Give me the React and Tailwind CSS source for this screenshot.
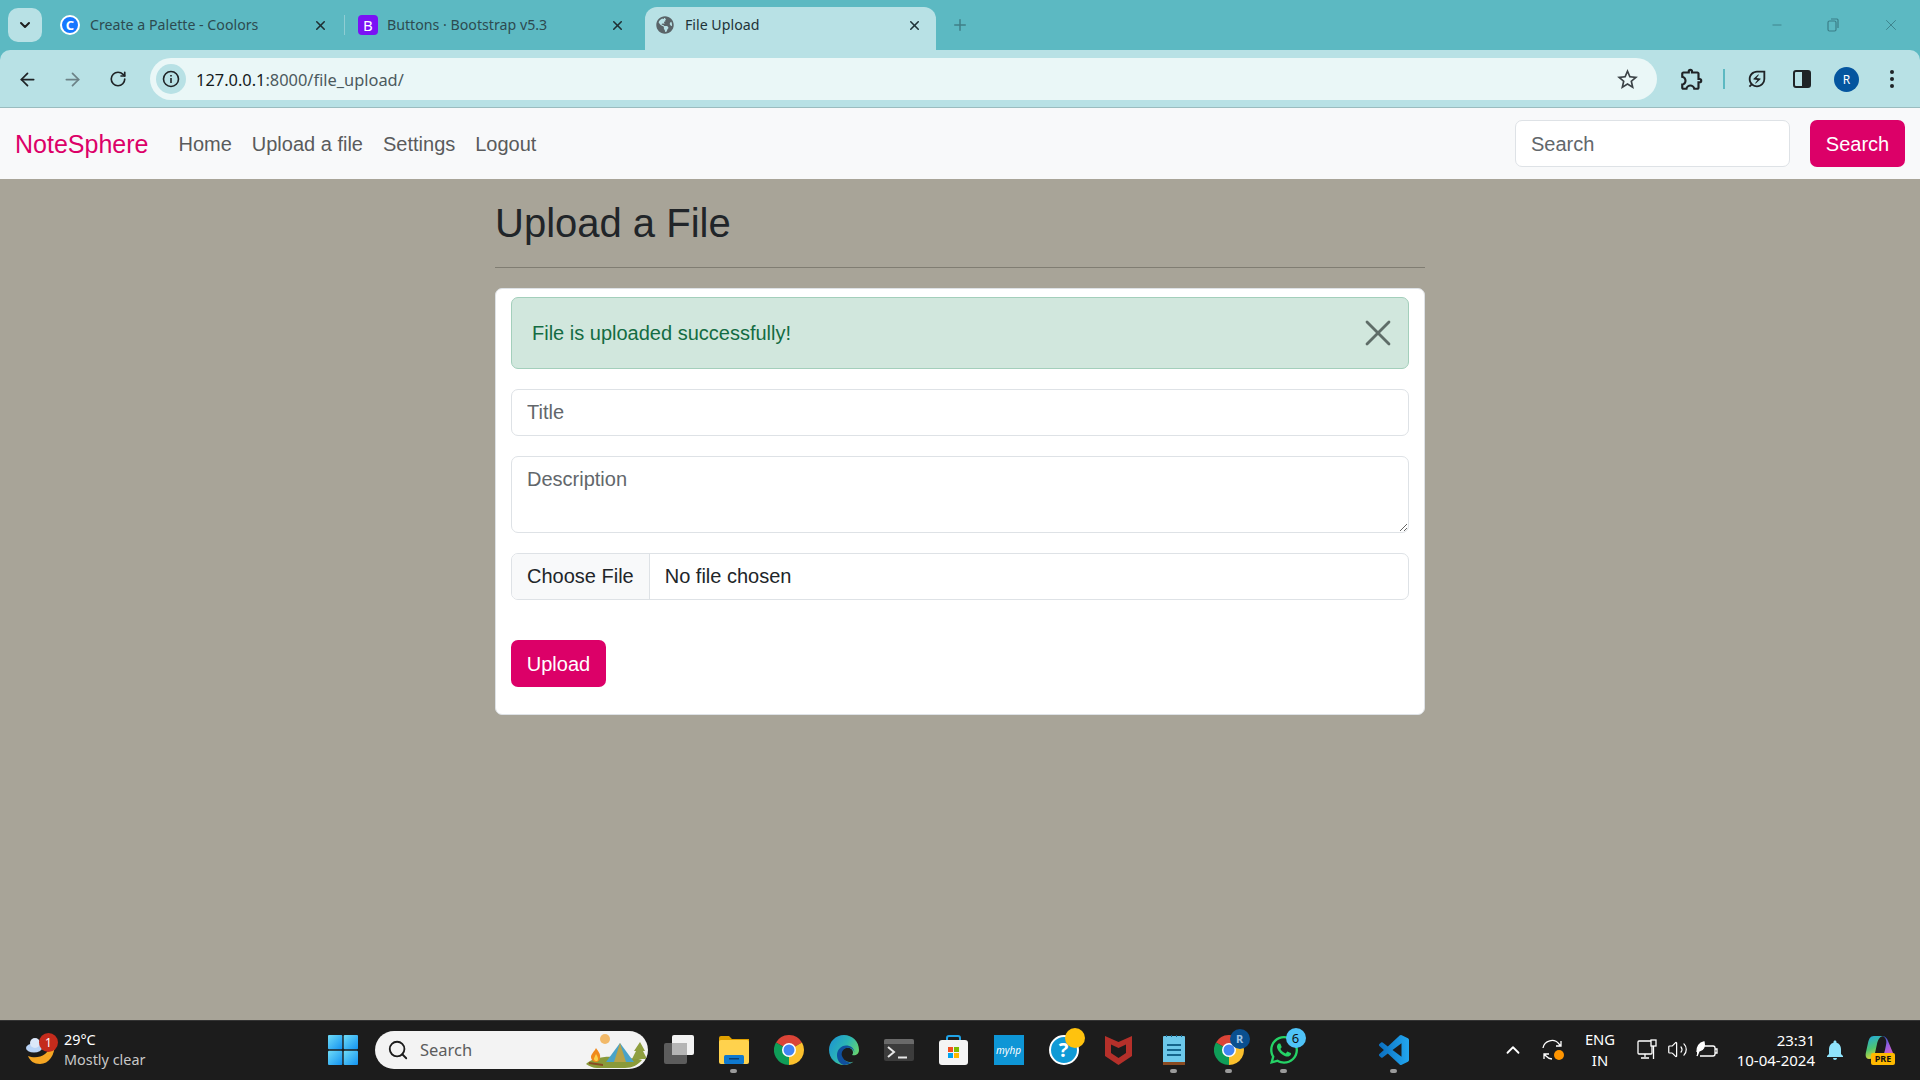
import React from 'react';
import { ArrowLeft, ArrowRight, RotateCw, Plus, X, Minus, ChevronDown, ChevronUp, Search as SearchIcon, Volume2 } from 'lucide-react';
import { MdOutlineExtension, MdOutlineEnergySavingsLeaf, MdStarBorder, MdNotifications } from 'react-icons/md';
import { FaGlobeAmericas, FaWhatsapp } from 'react-icons/fa';

function Chrome({ size = 30 }) {
  return (
    <svg width={size} height={size} viewBox="0 0 24 24">
      <path d="M12 12L1.6 6A12 12 0 0 1 22.39 6Z" fill="#db4437" />
      <path d="M12 12L1.6 6A12 12 0 0 0 12 24Z" fill="#0f9d58" />
      <path d="M12 12L22.39 6A12 12 0 0 1 12 24Z" fill="#fbc02d" />
      <circle cx="12" cy="12" r="5.6" fill="#fff" />
      <circle cx="12" cy="12" r="4.4" fill="#4285f4" />
    </svg>
  );
}

function Edge() {
  return (
    <svg width="30" height="30" viewBox="0 0 30 30">
      <defs>
        <linearGradient id="edgeTop" x1="0" y1="0" x2="1" y2="0.6">
          <stop offset="0" stopColor="#1a8fd6" />
          <stop offset="0.55" stopColor="#2cb5b5" />
          <stop offset="1" stopColor="#6bd66a" />
        </linearGradient>
      </defs>
      <path d="M15 0C6.7 0 0 6.7 0 15c0 8.3 6.7 15 15 15 3.6 0 6.8-1.2 9.4-3.2C20 28 14 26 12 21c-1-3 .5-7 4.5-8 4-1 7.5 1 7.5 4.5 0 1-.4 2-1 2.6 3.5 1 7-1 7-5.1C30 6.5 23.3 0 15 0Z" fill="url(#edgeTop)" />
      <path d="M8 20c0-5 4-9.5 9-9.5 4.5 0 8 2.5 8.5 7-1-3.5-4.5-5.5-8-4.5-4 1-5.5 5-4.500 8 1.500 4 5.500 7 10.500 6.500C20.500 29 17.500 30 15 30 10.500 29 8 25 8 20Z" fill="#0f4f9e" />
    </svg>
  );
}

function TentScene() {
  return (
    <svg width="64" height="38" viewBox="0 0 64 38">
      <circle cx="21" cy="8" r="5" fill="#f2b968" />
      <path d="M2 33c6-6 18-8 30-7 10 1 20 1 26 3-4 5-10 8-17 8H13C9 37 5 35 2 33Z" fill="#8a9a3a" />
      <path d="M56 11l5 9-2 0 4 8H48l4-8-2 0Z" fill="#8f9f3f" />
      <path d="M36 12L50 31H22Z" fill="#4aa3c8" />
      <path d="M36 12L30 31h12Z" fill="#b7a34a" />
      <path d="M12 17c2 3 5 6 4 10 0 2-2 4-4 4s-5-2-5-5c0-3 3-5 5-9Z" fill="#f08a1d" />
      <path d="M12 23c1 2 2 3 2 5s-1 2-2 2-2-1-2-2 1-3 2-5Z" fill="#fbd14b" />
      <path d="M5 31l14 2v2L5 33Z" fill="#8a4b22" />
    </svg>
  );
}

function Slot({ children, dot }) {
  return (
    <div className="relative w-[55px] h-full flex items-center justify-center">
      {children}
      {dot && <span className="absolute bottom-[5px] w-[7px] h-[4px] rounded-full bg-[#9a9a9a]" />}
    </div>
  );
}

function Taskbar() {
  return (
    <div className="h-[60px] bg-[#1c1c1c] border-t border-[#333] pb-[2px] flex items-center text-white font-['Noto_Sans',sans-serif]">
      {/* weather */}
      <div className="w-[315px] h-full flex items-center pl-[25px] gap-[9px]">
        <div className="relative w-[30px] h-[32px]">
          <svg width="30" height="32" viewBox="0 0 30 32">
            <path d="M30 9c0 12-6 21-15 21-6 0-10-3-12-8 5 2 12 2 17-2 4-3 6-7 6-11Z" fill="#f5a623" />
            <ellipse cx="9" cy="14" rx="8" ry="4.500" fill="#b9d4f7" />
            <circle cx="10" cy="9" r="5" fill="#dbe8fa" />
          </svg>
          <span className="absolute -top-[1px] left-[14px] w-[19px] h-[19px] rounded-full bg-[#c42b1c] text-[12px] leading-[19px] text-center">1</span>
        </div>
        <div className="text-[14.400px] leading-[20px]">
          <p>29°C</p>
          <p className="text-[#c8c8c8]">Mostly clear</p>
        </div>
      </div>

      {/* start + search */}
      <Slot>
        <svg width="30" height="30" viewBox="0 0 30 30">
          <defs>
            <linearGradient id="winA" x1="0" y1="0" x2="1" y2="1">
              <stop offset="0" stopColor="#6fdcf7" />
              <stop offset="1" stopColor="#1292f0" />
            </linearGradient>
          </defs>
          <rect x="0" y="0" width="14.300" height="14.300" rx="1" fill="url(#winA)" />
          <rect x="15.700" y="0" width="14.300" height="14.300" rx="1" fill="url(#winA)" />
          <rect x="0" y="15.700" width="14.300" height="14.300" rx="1" fill="url(#winA)" />
          <rect x="15.700" y="15.700" width="14.300" height="14.300" rx="1" fill="url(#winA)" />
        </svg>
      </Slot>
      <div className="w-[273px] h-[38px] ml-[5px] mr-[3px] rounded-full bg-[#f3f3f3] flex items-center relative overflow-hidden">
        <SearchIcon size={22} strokeWidth={2} className="ml-[12px] text-[#1c1c1c]" />
        <span className="ml-[11px] text-[16.500px] text-[#5c5c5c]">Search</span>
        <div className="absolute right-0 bottom-0"><TentScene /></div>
      </div>

      {/* pinned apps */}
      <Slot>
        <svg width="30" height="30" viewBox="0 0 30 30">
          <rect x="0" y="8" width="23" height="21" rx="2" fill="#5c5c5c" />
          <rect x="8" y="0" width="22" height="20" rx="2" fill="#f2f2f2" />
          <rect x="8" y="8" width="15" height="12" fill="#b5b5b5" />
        </svg>
      </Slot>
      <Slot dot>
        <svg width="30" height="28" viewBox="0 0 30 28">
          <path d="M0 2a2 2 0 0 1 2-2h8l3 3h17v5H0Z" fill="#e0a100" />
          <rect x="0" y="4" width="30" height="24" rx="2" fill="#ffd24d" />
          <rect x="5" y="19" width="20" height="9" rx="1.500" fill="#0f79cf" />
          <rect x="10" y="22" width="10" height="1.500" fill="#0a3f73" />
        </svg>
      </Slot>
      <Slot><Chrome /></Slot>
      <Slot><Edge /></Slot>
      <Slot>
        <div className="w-[30px] h-[22px] rounded-[2px] bg-[#3c3c3c] relative">
          <div className="h-[5px] bg-[#6a6a6a] rounded-t-[2px]" />
          <svg className="absolute left-[3px] top-[7px]" width="24" height="13" viewBox="0 0 24 13">
            <path d="M1 1l6 5-6 5" fill="none" stroke="#e8e8e8" strokeWidth="2" />
            <path d="M11 11.500h9" stroke="#e8e8e8" strokeWidth="2" />
          </svg>
        </div>
      </Slot>
      <Slot>
        <svg width="29" height="30" viewBox="0 0 29 30">
          <path d="M8 7V3a2 2 0 0 1 2-2h9a2 2 0 0 1 2 2v4" fill="none" stroke="#20a4e8" strokeWidth="2" />
          <rect x="0" y="5" width="29" height="25" rx="3" fill="#f4f4f4" />
          <rect x="9" y="12" width="5" height="5" fill="#f25022" />
          <rect x="15" y="12" width="5" height="5" fill="#7fba00" />
          <rect x="9" y="18" width="5" height="5" fill="#00a4ef" />
          <rect x="15" y="18" width="5" height="5" fill="#ffb900" />
        </svg>
      </Slot>
      <Slot>
        <div className="w-[30px] h-[30px] bg-[#0e96d6] flex items-center justify-center text-[10px] italic leading-none">myhp</div>
      </Slot>
      <Slot>
        <div className="relative w-[30px] h-[30px] rounded-full bg-[#0f9ad6] border-2 border-white flex items-center justify-center">
          <span className="text-[20px] font-bold leading-none">?</span>
          <span className="absolute -top-[9px] -right-[8px] w-[20px] h-[20px] rounded-full bg-[#ffc20e]" />
        </div>
      </Slot>
      <Slot>
        <svg width="27" height="30" viewBox="0 0 27 30">
          <path d="M0 1l13.500 6L27 1v20l-13.500 9L0 21Z" fill="#b5302a" />
          <path d="M6 9.500l7.500 3.500L21 9.500V18l-7.500 5L6 18Z" fill="#1c1c1c" />
        </svg>
      </Slot>
      <Slot dot>
        <svg width="22" height="30" viewBox="0 0 22 30">
          <rect x="0" y="1" width="22" height="29" rx="1" fill="#6cc8ea" />
          <rect x="0" y="27" width="22" height="3" fill="#8a4b22" />
          <path d="M4 10h14M4 15h14M4 20h14" stroke="#14648c" strokeWidth="2" />
          <path d="M3 1h1M8 1h1M13 1h1M18 1h1" stroke="#14648c" strokeWidth="2" />
        </svg>
      </Slot>
      <Slot dot>
        <div className="relative">
          <Chrome />
          <span className="absolute -top-[6px] -right-[6px] w-[20px] h-[20px] rounded-full bg-[#0a4f8f] text-[#9fc3e6] text-[11px] font-bold leading-[20px] text-center">R</span>
        </div>
      </Slot>
      <Slot dot>
        <div className="relative">
          <FaWhatsapp size={32} className="text-[#25d366]" />
          <span className="absolute -top-[6px] -right-[6px] w-[20px] h-[20px] rounded-full bg-[#4fc3f7] text-[#111] text-[13px] leading-[20px] text-center">6</span>
        </div>
      </Slot>
      <Slot />
      <Slot dot>
        <svg width="30" height="30" viewBox="0 0 100 100">
          <defs>
            <linearGradient id="vsc" x1="0" y1="0" x2="1" y2="0">
              <stop offset="0" stopColor="#0b6fc0" />
              <stop offset="1" stopColor="#22a7f0" />
            </linearGradient>
          </defs>
          <path d="M96.460 10.800L75.860.870a6.230 6.230 0 0 0-7.100 1.200L29.350 38.040 12.170 25a4.160 4.160 0 0 0-5.310.240L1.360 30.230a4.170 4.170 0 0 0 0 6.160L16.260 50 1.360 63.600a4.170 4.170 0 0 0 0 6.170l5.500 5a4.160 4.160 0 0 0 5.310.240l17.180-13.040 39.410 35.960a6.220 6.220 0 0 0 7.100 1.200l20.600-9.920A6.250 6.250 0 0 0 100 83.580V16.420a6.250 6.250 0 0 0-3.540-5.620zM75 72.700L45.100 50 75 27.300z" fill="url(#vsc)" />
        </svg>
      </Slot>

      {/* tray */}
      <div className="flex-1 h-full flex items-center">
        <ChevronUp size={22} strokeWidth={2} className="ml-[81px]" />
        <div className="relative ml-[18px] w-[22px] h-[22px]">
          <svg width="22" height="22" viewBox="0 0 22 22" fill="none" stroke="#fff" strokeWidth="1.300">
            <path d="M1 9a9 9 0 0 1 16-4l2 2M19 2v5h-5" />
            <path d="M2 15l2 2a9 9 0 0 0 6 3M2 20v-5h5" />
          </svg>
          <span className="absolute right-0 bottom-[1px] w-[10px] h-[10px] rounded-full bg-[#ff9500]" />
        </div>
        <div className="ml-[18px] w-[36px] text-center text-[14.800px] leading-[21px]">
          <p>ENG</p>
          <p>IN</p>
        </div>
        <svg className="ml-[19px]" width="20" height="22" viewBox="0 0 20 22" fill="none" stroke="#fff" strokeWidth="1.300">
          <rect x="1" y="2" width="14" height="13" rx="1" />
          <path d="M8 15v3M4 19h8" />
          <rect x="14" y="1" width="5" height="6" fill="#1c1c1c" />
          <path d="M16.500 7v13" />
        </svg>
        <Volume2 size={21} strokeWidth={1.400} className="ml-[10px]" />
        <svg className="ml-[8px]" width="22" height="20" viewBox="0 0 22 20" fill="none" stroke="#fff" strokeWidth="1.300">
          <path d="M6 6h11a2 2 0 0 1 2 2v6a2 2 0 0 1-2 2H4" />
          <path d="M19 9h2v4h-2" />
          <path d="M1 12c0-6 3-9 7-10 1 4 0 8-5 9L1 16" fill="#fff" />
        </svg>
        <div className="ml-auto text-right text-[15px] leading-[20px] w-[90px] mr-[1px]">
          <p>23:31</p>
          <p>10-04-2024</p>
        </div>
      </div>
      <div className="w-[104px] h-full flex items-center relative">
        <MdNotifications size={24} className="ml-[7px] text-[#8fe3fb]" />
        <div className="relative ml-[18px] w-[30px] h-[30px]">
          <svg width="30" height="26" viewBox="0 0 30 26">
            <defs>
              <linearGradient id="copL" x1="0" y1="0" x2="0.3" y2="1">
                <stop offset="0" stopColor="#1fa9e6" />
                <stop offset="0.6" stopColor="#4fc46f" />
                <stop offset="1" stopColor="#d6d63a" />
              </linearGradient>
              <linearGradient id="copR" x1="0.2" y1="0" x2="0.8" y2="1">
                <stop offset="0" stopColor="#1f55c9" />
                <stop offset="0.5" stopColor="#9a5fe0" />
                <stop offset="1" stopColor="#e65fb8" />
              </linearGradient>
            </defs>
            <path d="M9 1h9c-4 1-5 4-6 8l-2 9c-1 4-3 6-6 6-3 0-4-3-3-7l2-9C4 4 5 1 9 1Z" fill="url(#copL)" />
            <path d="M17 1c3 0 5 2 6 5l5 12c1 3-1 5-4 5h-9c3-1 4-4 5-8l1-5c1-4 0-8-4-9Z" fill="url(#copR)" />
          </svg>
          <span className="absolute left-[6px] bottom-0 w-[24px] h-[12px] rounded-[2px] bg-[#ffb900] text-[#111] text-[9px] font-bold leading-[12px] text-center">PRE</span>
        </div>
      </div>
    </div>
  );
}

function BrowserChrome() {
  return (
    <div className="font-['Noto_Sans',sans-serif]">
      {/* tabs */}
      <div className="h-[50px] bg-[#5cb9c2] flex items-end text-[#2d4b50]">
        <div className="self-start mt-[8px] ml-[8px] w-[34px] h-[34px] rounded-[10px] bg-[#b8e1e5] flex items-center justify-center">
          <ChevronDown size={16} strokeWidth={3} className="text-[#1f1f1f]" />
        </div>
        <div className="h-[43px] w-[302px] flex items-center pl-[18px] pr-[16px] pb-[7px]">
          <div className="w-[20px] h-[20px] rounded-full bg-[#1677ff] border-2 border-white flex items-center justify-center text-white text-[13px] font-bold leading-none">C</div>
          <span className="ml-[10px] text-[14.200px] flex-1">Create a Palette - Coolors</span>
          <X size={15} strokeWidth={2.500} className="text-[#1f2f33]" />
        </div>
        <div className="w-px h-[20px] bg-[#8fcdd3] mb-[15px]" />
        <div className="h-[43px] w-[300px] flex items-center pl-[13px] pr-[20px] pb-[7px]">
          <div className="w-[20px] h-[20px] rounded-[4px] bg-[#7a12f5] text-white text-[15px] flex items-center justify-center leading-none">B</div>
          <span className="ml-[9px] text-[14.200px] flex-1">Buttons · Bootstrap v5.3</span>
          <X size={15} strokeWidth={2.500} className="text-[#1f2f33]" />
        </div>
        <div className="h-[43px] w-[291px] rounded-t-[12px] bg-[#b8e1e5] flex items-center pl-[11px] pr-[14px] pb-[7px] text-[#1f3338]">
          <FaGlobeAmericas size={18} className="text-[#5a6468]" />
          <span className="ml-[11px] text-[14.200px] flex-1">File Upload</span>
          <X size={15} strokeWidth={2.500} />
        </div>
        <Plus size={18} strokeWidth={2} className="ml-[15px] mb-[16px] text-[#3f7f87]" />
        <div className="flex-1 self-start flex justify-end items-center h-[50px] pr-[20px] gap-[43px] text-[#3b7f88]">
          <Minus size={14} strokeWidth={1.500} />
          <svg width="12" height="14" viewBox="0 0 12 14" fill="none" stroke="currentColor" strokeWidth="1.200">
            <rect x="1" y="3" width="8" height="10" rx="1.500" />
            <path d="M4 1h6a1.500 1.500 0 0 1 1 1v8" />
          </svg>
          <X size={18} strokeWidth={1.200} />
        </div>
      </div>

      {/* toolbar */}
      <div className="h-[58px] bg-[#5cb9c2]">
        <div className="h-full rounded-t-[10px] bg-[#b8e1e5] border-b border-[#9abcbf] flex items-center relative pt-px">
          <ArrowLeft size={21} strokeWidth={2} className="ml-[17px] text-[#1f2326]" />
          <ArrowRight size={21} strokeWidth={2} className="ml-[24px] text-[#6c8287]" />
          <RotateCw size={18} strokeWidth={2.200} className="ml-[26px] text-[#1f2326]" />
          <div className="ml-[23px] w-[1507px] h-[42px] rounded-full bg-[#eaf7f7] flex items-center pl-[6px] pr-[17px]">
            <div className="w-[30px] h-[30px] rounded-full bg-[#b8e1e5] flex items-center justify-center">
              <svg width="18" height="18" viewBox="0 0 18 18" fill="none" stroke="#1f2326" strokeWidth="1.600">
                <circle cx="9" cy="9" r="7.500" />
                <path d="M9 8v5M9 5v1.500" />
              </svg>
            </div>
            <p className="ml-[10px] mt-px text-[16.400px] text-[#4c5a5e] flex-1"><span className="text-[#141a1c]">127.0.0.1</span>:8000/file_upload/</p>
            <MdStarBorder size={25} className="text-[#3c4347]" />
          </div>
          <MdOutlineExtension size={26} className="ml-[22px] text-[#1f2326]" />
          <div className="ml-[18px] w-[2px] h-[20px] bg-[#5cb9c2]" />
          <MdOutlineEnergySavingsLeaf size={22} className="ml-[21px] text-[#1f2326]" />
          <svg className="ml-[25px]" width="18" height="18" viewBox="0 0 18 18">
            <rect x="1" y="1" width="16" height="16" rx="2" fill="none" stroke="#1f2326" strokeWidth="2" />
            <rect x="9" y="1" width="8" height="16" fill="#1f2326" />
          </svg>
          <div className="ml-[23px] w-[25px] h-[25px] rounded-full bg-[#04559f] text-white text-[12px] leading-[25px] text-center">R</div>
          <div className="ml-[31px] flex flex-col gap-[3px]">
            <span className="w-[4px] h-[4px] rounded-full bg-[#1f2326]" />
            <span className="w-[4px] h-[4px] rounded-full bg-[#1f2326]" />
            <span className="w-[4px] h-[4px] rounded-full bg-[#1f2326]" />
          </div>
        </div>
      </div>
    </div>
  );
}

export default function App() {
  return (
    <div className="h-screen flex flex-col overflow-hidden font-['Liberation_Sans',Arial,sans-serif] text-[20px] leading-[30px] text-[#212529]">
      <BrowserChrome />

      {/* Navbar */}
      <nav className="h-[71px] bg-[#f8f9fa] flex items-center px-[15px]">
        <a className="text-[25px] leading-[38px] text-[#dc0068] mr-[20px]">NoteSphere</a>
        <div className="flex text-[#5a5b5c]">
          <a className="px-[10px]">Home</a>
          <a className="px-[10px]">Upload a file</a>
          <a className="px-[10px]">Settings</a>
          <a className="px-[10px]">Logout</a>
        </div>
        <div className="ml-auto flex gap-[20px]">
          <input placeholder="Search" readOnly className="w-[275px] h-[47px] px-[15px] pt-px bg-white border border-[#dee2e6] rounded-[7px] outline-none placeholder:text-[#62676b]" />
          <button className="w-[95px] h-[47px] bg-[#dc0068] text-white rounded-[7px]">Search</button>
        </div>
      </nav>

      {/* Page */}
      <main className="flex-1 bg-[#a8a498]">
        <div className="w-[930px] mx-auto pt-[20px]">
          <h2 className="text-[40px] leading-[48px]">Upload a File</h2>
          <hr className="mt-[20px] mb-[20px] border-t border-[#807d72]" />
          <div className="bg-white border border-[#dee2e6] rounded-[7px] px-[15px] pt-[8px] pb-[27px]">
            <div className="h-[72px] rounded-[7px] bg-[#d1e7dd] border border-[#a3cfbb] text-[#146c43] flex items-center justify-between pl-[20px] pr-[8px]">
              <span>File is uploaded successfully!</span>
              <X size={44} strokeWidth={1.500} className="text-[#5f6d68]" />
            </div>
            <input placeholder="Title" readOnly className="block w-full h-[47px] mt-[20px] px-[15px] border border-[#dee2e6] rounded-[7px] outline-none placeholder:text-[#62676b]" />
            <textarea placeholder="Description" readOnly className="block w-full h-[77px] mt-[20px] px-[15px] py-[7px] border border-[#dee2e6] rounded-[7px] outline-none resize-y placeholder:text-[#62676b]" />
            <div className="flex w-full h-[47px] mt-[20px] border border-[#dee2e6] rounded-[7px] overflow-hidden">
              <span className="px-[15px] bg-[#f8f9fa] border-r border-[#dee2e6] leading-[45px]">Choose File</span>
              <span className="px-[15px] leading-[45px]">No file chosen</span>
            </div>
            <button className="block mt-[40px] w-[95px] h-[47px] bg-[#dc0068] text-white rounded-[7px]">Upload</button>
          </div>
        </div>
      </main>

      <Taskbar />
    </div>
  );
}
